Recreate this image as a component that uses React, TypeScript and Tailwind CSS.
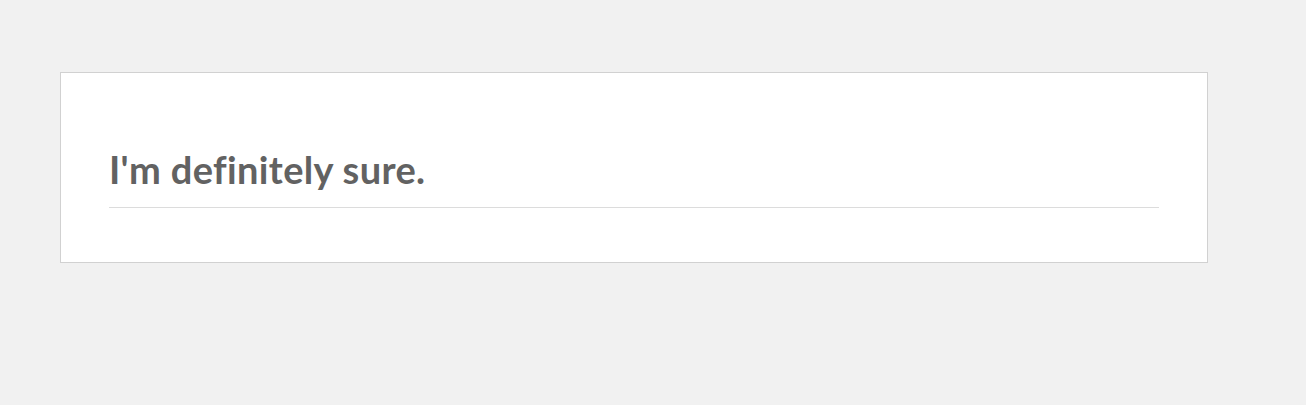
export default function App() {
  return (
    <div className="min-h-[405px] bg-[#f1f1f1] pt-[72px] pl-[60px]">
      <div className="w-[1148px] border border-[#d1d1d1] bg-white px-[48px] pt-[74px] pb-[54px]">
        <h2 className="border-b border-[#dcdcdc] pb-[15px] text-[38px] leading-[45px] font-bold tracking-[0.35px] text-[#626262] [font-variant-ligatures:none] [font-family:Lato,'Open_Sans',sans-serif]">
          I'm definitely sure.
        </h2>
      </div>
    </div>
  );
}
